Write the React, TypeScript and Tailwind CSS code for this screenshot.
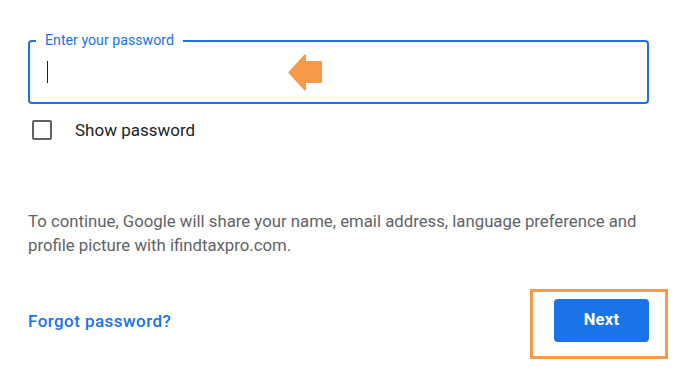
import React from "react";

export default function App() {
  return (
    <div
      className="relative w-[681px] h-[374px] bg-white overflow-hidden"
      style={{ fontFamily: "Roboto, 'Liberation Sans', sans-serif" }}
    >
      <div className="pt-[40px] pl-[28px] pr-[32px]">
        {/* Password field */}
        <div className="relative h-[64px] border-2 border-[#1a73e8] rounded-[4px] flex items-center pl-[17px]">
          <span className="absolute -top-[10px] left-[6px] px-[9px] bg-white text-[14.2px] leading-[16px] text-[#1a73e8]">
            Enter your password
          </span>
          <div className="w-px h-[22px] bg-[#202124]" />
        </div>

        {/* Show password */}
        <div className="mt-[15px] flex items-center pl-[4px]">
          <div className="w-[20px] h-[20px] border-2 border-[#5f6368] rounded-[2px]" />
          <span className="ml-[23px] text-[17px] leading-[22px] text-[#202124]">Show password</span>
        </div>

        {/* Info text */}
        <p className="mt-[68px] text-[16.75px] leading-[24px] text-[#5f6368]">
          To continue, Google will share your name, email address, language preference and profile picture with
          ifindtaxpro.com.
        </p>

        {/* Actions */}
        <div className="mt-[42px] flex items-center justify-between">
          <a className="text-[17px] font-medium tracking-[0.45px] text-[#1a73e8] mt-[3px]">Forgot password?</a>
          <button className="w-[95px] h-[43px] rounded-[4px] bg-[#1a73e8] text-white text-[16.5px] font-bold tracking-[0.3px]">
            Next
          </button>
        </div>
      </div>

      {/* Annotation arrow */}
      <svg className="absolute left-[288px] top-[54px]" width="34" height="37" viewBox="0 0 34 37">
        <polygon
          points="1.5,18.5 17,1.5 17,8 33,8 33,28 17,28 17,35.5"
          fill="#f79a4a"
          stroke="#f79a4a"
          strokeWidth="2"
          strokeLinejoin="round"
        />
      </svg>

      {/* Annotation box */}
      <div className="absolute left-[530px] top-[289px] w-[138px] h-[70px] border-[3px] border-[#f79a4a]" />
    </div>
  );
}
